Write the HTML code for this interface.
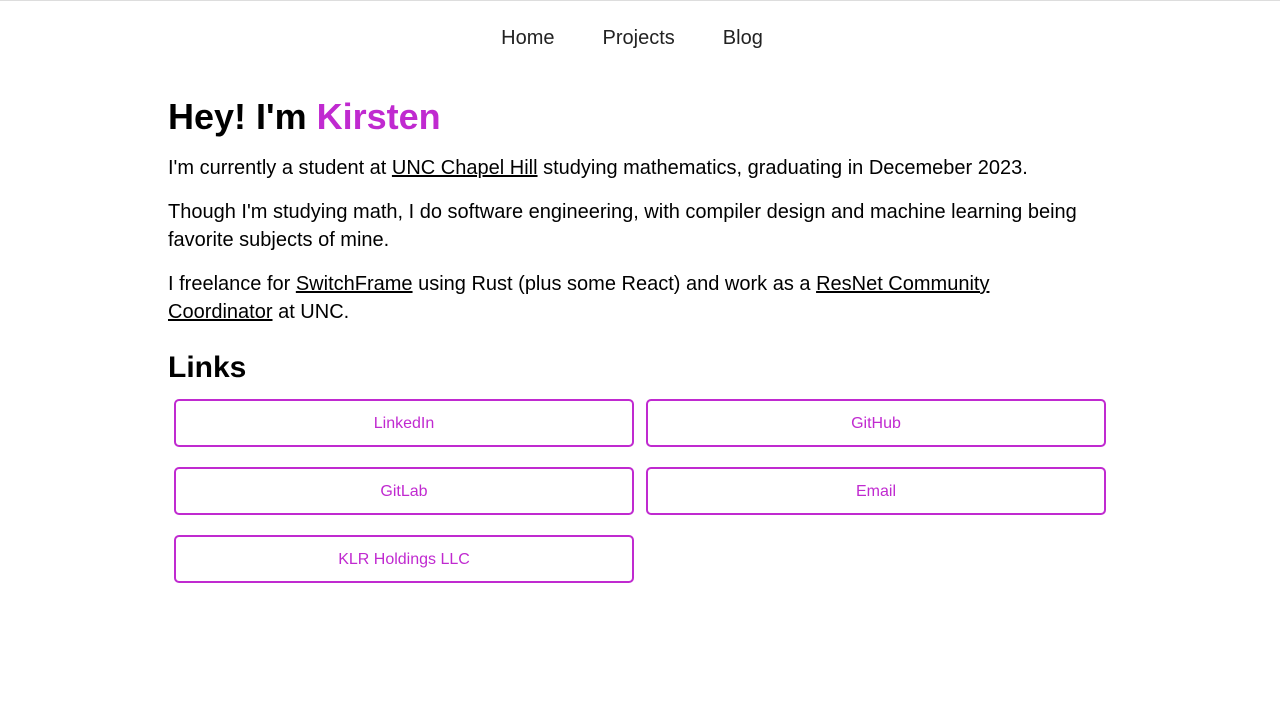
<!DOCTYPE html>
<html><head><style>
body{margin:0;font-family:"Liberation Sans",sans-serif;color:#000;background:#fff;border-top:1px solid #ddd;}
nav{text-align:center;padding-top:26px;height:31px;font-size:20px;color:#222;padding-right:16px}
nav span{margin:0 24px}
main{position:absolute;left:168px;top:0;width:944px}
h1{position:absolute;top:96px;margin:0;font-size:36px;line-height:42px;white-space:nowrap}
h1 b{color:#c02ad0}
p{margin:0;font-size:20px;line-height:28px;position:absolute;left:0;width:920px}
a{color:#000;text-decoration:underline}
h2{position:absolute;top:350px;margin:0;font-size:30px;line-height:36px}
.btn{position:absolute;width:456px;height:44px;border:2px solid #c02ad0;border-radius:5px;color:#c02ad0;font-size:16px;line-height:46px;text-align:center}
</style></head><body>
<nav><span>Home</span><span>Projects</span><span>Blog</span></nav>
<main>
<h1>Hey! I'm <b>Kirsten</b></h1>
<p style="top:154px">I'm currently a student at <a>UNC Chapel Hill</a> studying mathematics, graduating in Decemeber 2023.</p>
<p style="top:198px">Though I'm studying math, I do software engineering, with compiler design and machine learning being favorite subjects of mine.</p>
<p style="top:270px">I freelance for <a>SwitchFrame</a> using Rust (plus some React) and work as a <a>ResNet Community Coordinator</a> at UNC.</p>
<h2>Links</h2>
</main>
<div class="btn" style="left:174px;top:399px">LinkedIn</div>
<div class="btn" style="left:646px;top:399px">GitHub</div>
<div class="btn" style="left:174px;top:467px">GitLab</div>
<div class="btn" style="left:646px;top:467px">Email</div>
<div class="btn" style="left:174px;top:535px">KLR Holdings LLC</div>
</body></html>
